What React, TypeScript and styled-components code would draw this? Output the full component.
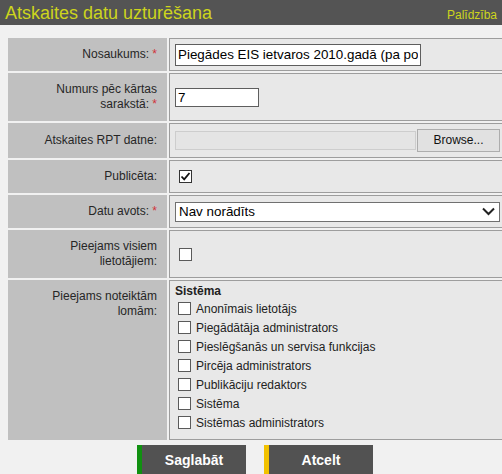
import styled, { createGlobalStyle } from "styled-components";

const GlobalStyle = createGlobalStyle`
  html, body {
    margin: 0;
    padding: 0;
    overflow: hidden;
    background: #f1f1f1;
    font-family: "Liberation Sans", Arial, sans-serif;
  }
`

const Header = styled.header`
  display: flex;
  align-items: center;
  justify-content: space-between;
  height: 25px;
  padding: 0 5px;
  background: #545454;
  color: #cdd51c;
`

const Title = styled.h1`
  margin: 0;
  font-size: 18px;
  font-weight: normal;
  line-height: 22px;
`

const HelpLink = styled.a`
  font-size: 12px;
  padding-top: 4px;
  color: #cdd51c;
  text-decoration: none;
`

const Content = styled.main`
  width: 498px;
  padding: 13px 0 0 8px;
`

const FormGrid = styled.div`
  display: grid;
  grid-template-columns: 159px 1fr;
  gap: 2px;
`

const Label = styled.div<{ $top?: boolean }>`
  display: flex;
  align-items: ${(p) => (p.$top ? "flex-start" : "center")};
  justify-content: flex-end;
  padding: 9px 10px;
  background: #c0c0c0;
  color: #262626;
  font-size: 12px;
  line-height: 15px;
  text-align: right;
`

const NoWrap = styled.span`
  white-space: nowrap;
`

const Required = styled.span`
  color: #d0343a;
`

const Value = styled.div<{ $pad?: string }>`
  display: flex;
  flex-direction: column;
  justify-content: center;
  padding: ${(p) => p.$pad || "4px 5px"};
  background: #e8e8e8;
  border: 1px solid #9d9d9d;
`

const TextInput = styled.input<{ $w: number }>`
  box-sizing: border-box;
  width: ${(p) => p.$w}px;
  height: ${(p) => (p.$w > 100 ? 22 : 19)}px;
  padding: 0 2px;
  border: 1px solid #5e5e5e;
  background: #fff;
  color: #000;
  font-family: "Liberation Sans", Arial, sans-serif;
  font-size: 13.4px;
  outline: none;
`

const FileRow = styled.div`
  display: flex;
  align-items: center;
  gap: 1px;
`

const FileBox = styled.div`
  flex: 1;
  height: 17px;
  border: 1px solid #cdcdcd;
  background: #e4e4e4;
`

const BrowseButton = styled.div`
  box-sizing: border-box;
  width: 83px;
  height: 23px;
  border: 1px solid #adadad;
  background: #e1e1e1;
  color: #111;
  font-size: 12px;
  line-height: 21px;
  text-align: center;
`

const Box = styled.span<{ $checked?: boolean }>`
  box-sizing: border-box;
  display: inline-flex;
  align-items: center;
  justify-content: center;
  width: 13px;
  height: 13px;
  margin: 3px 5px 3px 3px;
  border: 1px solid ${(p) => (p.$checked ? "#333" : "#5a5a5a")};
  background: #fff;
  flex-shrink: 0;
`

const SelectBox = styled.div`
  box-sizing: border-box;
  display: flex;
  align-items: center;
  justify-content: space-between;
  height: 20px;
  padding: 0 4px 0 3px;
  border: 1px solid #707070;
  background: #fff;
  color: #000;
  font-size: 13.4px;
`

const GroupTitle = styled.div`
  font-size: 12px;
  font-weight: bold;
  color: #222;
  line-height: 14px;
  margin-bottom: 1px;
`

const RoleItem = styled.label`
  display: flex;
  align-items: center;
  height: 19px;
  font-size: 12px;
  color: #222;
`

const Actions = styled.div`
  display: flex;
  justify-content: center;
  gap: 18px;
  padding: 5px 4px 0 0;
`

const ActionButton = styled.button<{ $accent: string }>`
  width: 109px;
  height: 30px;
  border: none;
  border-left: 5px solid ${(p) => p.$accent};
  background: #525252;
  color: #fff;
  font-family: "Liberation Sans", Arial, sans-serif;
  font-size: 14px;
  font-weight: bold;
  padding: 0;
  line-height: 30px;
`

const Check = () => (
  <svg width="11" height="11" viewBox="0 0 11 11">
    <path d="M1.5 5.5 L4.2 8.3 L9.5 2" fill="none" stroke="#111" strokeWidth="1.8" />
  </svg>
)

const Chevron = () => (
  <svg width="13" height="9" viewBox="0 0 13 9">
    <path d="M1 1.5 L6.5 7 L12 1.5" fill="none" stroke="#222" strokeWidth="2" />
  </svg>
)

const roles = [
  "Anonīmais lietotājs",
  "Piegādātāja administrators",
  "Pieslēgšanās un servisa funkcijas",
  "Pircēja administrators",
  "Publikāciju redaktors",
  "Sistēma",
  "Sistēmas administrators",
]

export default function App() {
  return (
    <>
      <GlobalStyle />
      <Header>
        <Title>Atskaites datu uzturēšana</Title>
        <HelpLink href="#">Palīdzība</HelpLink>
      </Header>
      <Content>
        <FormGrid>
          <Label>
            <span>
              Nosaukums: <Required>*</Required>
            </span>
          </Label>
          <Value>
            <TextInput $w={246} defaultValue="Piegādes EIS ietvaros 2010.gadā (pa pozīcijām)" />
          </Value>

          <Label>
            <span>
              Numurs pēc kārtas{" "}
              <NoWrap>
                sarakstā: <Required>*</Required>
              </NoWrap>
            </span>
          </Label>
          <Value>
            <TextInput $w={84} defaultValue="7" />
          </Value>

          <Label>Atskaites RPT datne:</Label>
          <Value $pad="5px 5px">
            <FileRow>
              <FileBox />
              <BrowseButton>Browse...</BrowseButton>
            </FileRow>
          </Value>

          <Label>Publicēta:</Label>
          <Value $pad="4px 5px 4px 6px">
            <Box $checked>
              <Check />
            </Box>
          </Value>

          <Label>
            <span>
              Datu avots: <Required>*</Required>
            </span>
          </Label>
          <Value>
            <SelectBox>
              Nav norādīts
              <Chevron />
            </SelectBox>
          </Value>

          <Label>
            <span>Pieejams visiem lietotājiem:</span>
          </Label>
          <Value $pad="4px 5px 4px 6px">
            <Box />
          </Value>

          <Label $top>
            <span>Pieejams noteiktām lomām:</span>
          </Label>
          <Value $pad="3px 5px 7px 5px">
            <GroupTitle>Sistēma</GroupTitle>
            {roles.map((r) => (
              <RoleItem key={r}>
                <Box />
                {r}
              </RoleItem>
            ))}
          </Value>
        </FormGrid>
        <Actions>
          <ActionButton $accent="#109010">Saglabāt</ActionButton>
          <ActionButton $accent="#f2c200">Atcelt</ActionButton>
        </Actions>
      </Content>
    </>
  )
}
